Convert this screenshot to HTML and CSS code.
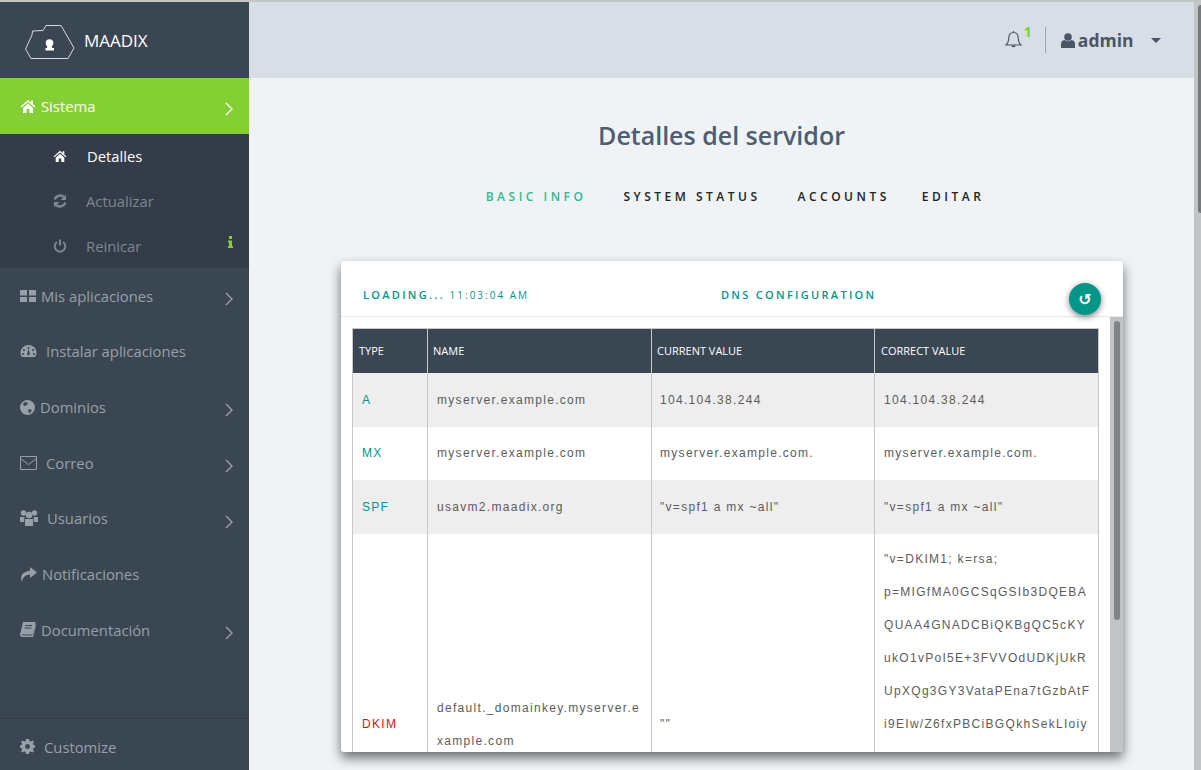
FILE: index.html
```html
<!DOCTYPE html>
<html lang="es">
<head>
    <meta charset="UTF-8">
    <title>Detalles del servidor</title>
    <link rel="stylesheet" href="styles.css">
</head>
<body>
    <div class="app">
        <!-- Sidebar -->
        <aside class="sidebar">
            <div class="brand">
                <svg class="brand-logo" width="50" height="35" viewBox="0 0 50 35" fill="none">
                    <path d="M.5 24 L7 10 L7.500 6 L18 5.500 L21 .5 H36 L49 23 L43 33.500 H6 Z" stroke="#d5d8dc" stroke-width="1"/>
                    <circle cx="24.500" cy="18" r="3.800" fill="#fff"/>
                    <path d="M22.500 19 H26.500 L27 23 H29 V25.500 H20.500 V23 H22 Z" fill="#fff"/>
                </svg>
                <span class="brand-name">MAADIX</span>
            </div>
            <nav class="nav">
                <a class="nav-item active">
                    <svg class="ic" width="16" height="14" viewBox="0 0 16 14"><path d="M8 1 L0.5 7.5 L1.5 8.5 L8 3 L14.5 8.5 L15.500 7.500 L13 5.300 V1.500 H11 V3.500 Z M3 9 L8 4.500 L13 9 V14 H9.500 V10 H6.500 V14 H3 Z"/></svg>
                    <span>Sistema</span>
                    <svg class="chev" width="8" height="14" viewBox="0 0 8 14"><path d="M1 1 L7 7 L1 13"/></svg>
                </a>
                <div class="subnav">
                    <a class="sub-item current">
                        <svg class="sub-ic" width="14" height="12" viewBox="0 0 16 14"><path d="M8 1 L0.5 7.5 L1.5 8.5 L8 3 L14.5 8.5 L15.500 7.500 L13 5.300 V1.500 H11 V3.500 Z M3 9 L8 4.500 L13 9 V14 H9.500 V10 H6.500 V14 H3 Z"/></svg>
                        <span>Detalles</span>
                    </a>
                    <a class="sub-item">
                        <svg class="sub-ic" width="14" height="14" viewBox="0 0 14 14" fill="none"><path d="M1.800 5.500 A5.500 5.500 0 0 1 11 3.200 M12.200 8.500 A5.500 5.500 0 0 1 3 10.800" stroke-width="2.400"/><path class="solid" d="M13 0.500 V6 H7.500 Z M1 13.500 V8 H6.500 Z"/></svg>
                        <span>Actualizar</span>
                    </a>
                    <a class="sub-item">
                        <svg class="sub-ic" width="14" height="14" viewBox="0 0 14 14" fill="none"><path d="M4 3 A5.300 5.300 0 1 0 10 3" stroke-width="2"/><path d="M7 0.500 V6.500" stroke-width="2"/></svg>
                        <span>Reinicar</span>
                        <svg class="sub-info" width="5" height="12" viewBox="0 0 5 12"><path d="M1 0 H4 V3 H1 Z M0 4.500 H4 V10 H5 V12 H0 V10 H1 V6.500 H0 Z"/></svg>
                    </a>
                </div>
                <a class="nav-item">
                    <svg class="ic" width="16" height="14" viewBox="0 0 16 14"><path d="M0 1 h7 v5.500 h-7 Z M9 1 h7 v5.500 h-7 Z M0 8 h7 v5 h-7 Z M9 8 h7 v5 h-7 Z"/></svg>
                    <span>Mis aplicaciones</span>
                    <svg class="chev" width="8" height="14" viewBox="0 0 8 14"><path d="M1 1 L7 7 L1 13"/></svg>
                </a>
                <a class="nav-item wide-gap">
                    <svg class="ic" width="17" height="14" viewBox="0 0 17 14"><path fill-rule="evenodd" d="M8.500 1 A8 8 0 0 1 16.500 9 Q16.500 11.500 15 13 H2 Q0.500 11.500 0.500 9 A8 8 0 0 1 8.500 1 Z M8.500 3 a1 1 0 1 0 .01 0 Z M4 5 a1 1 0 1 0 .01 0 Z M13 5 a1 1 0 1 0 .01 0 Z M3 9 a1 1 0 1 0 .01 0 Z M14 9 a1 1 0 1 0 .01 0 Z M8 6 L7 11 H10 L9 6 Z"/></svg>
                    <span>Instalar aplicaciones</span>
                </a>
                <a class="nav-item">
                    <svg class="ic" width="15" height="15" viewBox="0 0 15 15"><circle cx="7.500" cy="7.500" r="7.500"/><path class="cut" d="M5 2 L8 3 L7 5 L4 6 L3 4 Z M9 9 L12 10 L10 13 L8 12 Z"/></svg>
                    <span>Dominios</span>
                    <svg class="chev" width="8" height="14" viewBox="0 0 8 14"><path d="M1 1 L7 7 L1 13"/></svg>
                </a>
                <a class="nav-item wide-gap">
                    <svg class="ic" width="17" height="14" viewBox="0 0 17 14"><path class="line" d="M.500 .500 H16.500 V13.500 H.500 Z M.500 2.500 L8.500 8.500 L16.500 2.500"/></svg>
                    <span>Correo</span>
                    <svg class="chev" width="8" height="14" viewBox="0 0 8 14"><path d="M1 1 L7 7 L1 13"/></svg>
                </a>
                <a class="nav-item wide-gap">
                    <svg class="ic" width="18" height="16" viewBox="0 0 18 16"><circle cx="3.500" cy="3" r="2.700"/><circle cx="14.500" cy="3" r="2.700"/><circle cx="9" cy="5" r="3.300"/><path d="M0 7 H4.500 L4 12 H0 Z M13.500 7 H18 V12 H14 Z M5 9 H13 V16 H5 Z"/></svg>
                    <span>Usuarios</span>
                    <svg class="chev" width="8" height="14" viewBox="0 0 8 14"><path d="M1 1 L7 7 L1 13"/></svg>
                </a>
                <a class="nav-item">
                    <svg class="ic" width="17" height="15" viewBox="0 0 17 15"><path d="M10 0 L17 5.500 L10 11 V7.500 Q3 7.500 2 15 Q-2 6 10 3.500 Z"/></svg>
                    <span>Notificaciones</span>
                </a>
                <a class="nav-item">
                    <svg class="ic" width="16" height="15" viewBox="0 0 16 15"><path fill-rule="evenodd" d="M3 0 H15.500 L12.500 12.500 H2.500 Q1.500 12.500 1.800 13.500 H12 L15 2 L16 3 L13 15 H1.500 Q-.5 14 .300 11.500 Z M5 3 V4 H12 V3 Z M4.500 5.500 V6.500 H11.500 V5.500 Z"/></svg>
                    <span>Documentación</span>
                    <svg class="chev" width="8" height="14" viewBox="0 0 8 14"><path d="M1 1 L7 7 L1 13"/></svg>
                </a>
            </nav>
            <a class="customize">
                <svg class="ic" width="15" height="15" viewBox="0 0 15 15"><path fill-rule="evenodd" d="M6 0 H9 L9.400 2 L10.900 2.600 L12.600 1.500 L14 3 L12.800 4.600 L13.400 6 L15 6.300 V8.700 L13.400 9 L12.800 10.400 L14 12 L12.600 13.500 L10.900 12.400 L9.400 13 L9 15 H6 L5.600 13 L4.100 12.400 L2.400 13.500 L1 12 L2.200 10.400 L1.600 9 L0 8.700 V6.300 L1.600 6 L2.200 4.600 L1 3 L2.400 1.500 L4.100 2.600 L5.600 2 Z M7.500 5 a2.500 2.500 0 1 0 .01 0 Z"/></svg>
                <span>Customize</span>
            </a>
        </aside>

        <!-- Contenido -->
        <div class="main">
            <header class="topbar">
                <div class="bell">
                    <svg width="17" height="20" viewBox="0 0 17 20" fill="none" stroke="#4a5668" stroke-width="1.100"><path d="M8.500 2.500 C5 2.500 3.800 5 3.800 8 C3.800 11.500 2.800 13.500 1 15 H16 C14.200 13.500 13.200 11.500 13.200 8 C13.200 5 12 2.500 8.500 2.500 Z"/><path d="M8.500 1 V2.500"/><path d="M6.800 15.500 a1.800 1.800 0 0 0 3.400 0" fill="#4a5668"/></svg>
                    <span class="bell-count">1</span>
                </div>
                <div class="user">
                    <svg width="14" height="15" viewBox="0 0 14 15" fill="#4a5668"><circle cx="7" cy="4" r="3.800"/><path d="M0 15 V11 Q0 7.500 3.500 7 Q7 9.500 10.500 7 Q14 7.500 14 11 V15 Z"/></svg>
                    <span class="user-name">admin</span>
                    <span class="caret"></span>
                </div>
            </header>

            <section class="content">
                <h1 class="title">Detalles del servidor</h1>
                <ul class="tabs">
                    <li class="tab selected">BASIC INFO</li>
                    <li class="tab">SYSTEM STATUS</li>
                    <li class="tab">ACCOUNTS</li>
                    <li class="tab last">EDITAR</li>
                </ul>

                <div class="card">
                    <div class="card-head">
                        <div class="status"><b>LOADING...</b> <span>11:03:04 AM</span></div>
                        <div class="card-title">DNS CONFIGURATION</div>
                        <button class="refresh">↺</button>
                    </div>
                    <div class="card-body">
                        <table class="dns">
                            <colgroup><col class="c1"><col class="c2"><col class="c3"><col class="c4"></colgroup>
                            <thead>
                                <tr><th>TYPE</th><th>NAME</th><th>CURRENT VALUE</th><th>CORRECT VALUE</th></tr>
                            </thead>
                            <tbody>
                                <tr class="odd r1"><td class="ok">A</td><td>myserver.example.com</td><td>104.104.38.244</td><td>104.104.38.244</td></tr>
                                <tr class="r2"><td class="ok">MX</td><td>myserver.example.com</td><td>myserver.example.com.</td><td>myserver.example.com.</td></tr>
                                <tr class="odd r3"><td class="ok">SPF</td><td>usavm2.maadix.org</td><td>"v=spf1 a mx ~all"</td><td>"v=spf1 a mx ~all"</td></tr>
                                <tr class="dkim"><td class="bad">DKIM</td><td>default._domainkey.myserver.example.com</td><td>""</td><td>"v=DKIM1; k=rsa; p=MIGfMA0GCSqGSIb3DQEBAQUAA4GNADCBiQKBgQC5cKYukO1vPoI5E+3FVVOdUDKjUkRUpXQg3GY3VataPEna7tGzbAtFi9EIw/Z6fxPBCiBGQkhSekLIoiy</td></tr>
                            </tbody>
                        </table>
                        <div class="inner-scroll"><div class="inner-thumb"></div></div>
                    </div>
                </div>
            </section>
        </div>

        <div class="page-scroll"><div class="page-thumb"></div></div>
    </div>
</body>
</html>
```
FILE: styles.css
```css
/* Layout principal */
html, body {
    margin: 0;
    height: 100%;
    overflow: hidden;
}
body {
    font-family: "Open Sans", sans-serif;
    background: #eff3f6;
}
a {
    text-decoration: none;
}
.app {
    display: flex;
    height: 770px;
    border-top: 2px solid #c4c6c6;
    box-sizing: border-box;
}

/* Sidebar */
.sidebar {
    width: 249px;
    flex: none;
    display: flex;
    flex-direction: column;
    background: #3b4653;
    color: #97a0a8;
}
.brand {
    height: 76px;
    display: flex;
    align-items: center;
    padding-left: 25px;
    gap: 9px;
}
.brand-logo {
    margin-top: 4px;
}
.brand-name {
    color: #fff;
    font-size: 17px;
}
.nav {
    flex: 1;
}
.nav-item {
    display: flex;
    align-items: center;
    height: 55.670px;
    padding: 0 20px;
    gap: 5px;
    font-size: 14.800px;
    color: #97a0a8;
    position: relative;
}
.nav-item.wide-gap {
    gap: 9px;
}
.nav-item.active {
    height: 56px;
    background: #84cf33;
    color: #fff;
}
.ic {
    fill: currentColor;
    flex: none;
}
.ic .cut {
    fill: #3b4653;
}
.ic .line {
    fill: none;
    stroke: currentColor;
    stroke-width: 1;
}
.chev {
    position: absolute;
    right: 16px;
    top: 24px;
    fill: none;
    stroke: currentColor;
    stroke-width: 1.400;
}
.subnav {
    background: #333c48;
    height: 134px;
}
.sub-item {
    display: flex;
    align-items: center;
    height: 45px;
    padding: 0 0 2px 53px;
    box-sizing: border-box;
    font-size: 14.800px;
    color: #7d8691;
    position: relative;
}
.sub-item.current {
    color: #fff;
}
.sub-ic {
    width: 14px;
    margin-right: 19px;
    fill: currentColor;
    stroke: currentColor;
    stroke-width: 0;
}
.sub-item.current .sub-ic {
    margin-right: 20px;
}
.sub-item .sub-ic[fill="none"] {
    fill: none;
}
.sub-ic .solid {
    fill: currentColor;
    stroke: none;
}
.sub-info {
    position: absolute;
    left: 228px;
    top: 12px;
    fill: #84cf33;
}
.customize {
    height: 52px;
    padding: 4px 0 0 20px;
    box-sizing: border-box;
    border-top: 1px solid #333c48;
    display: flex;
    align-items: center;
    gap: 9px;
    font-size: 14.800px;
    color: #97a0a8;
}

/* Contenido */
.main {
    flex: 1;
    min-width: 0;
}
.topbar {
    height: 76px;
    background: #d7dee6;
    display: flex;
    justify-content: flex-end;
    align-items: center;
    padding-right: 33px;
}
.bell {
    display: flex;
    padding-right: 13px;
    position: relative;
    height: 26px;
    align-items: center;
    width: 28px;
    margin-right: 15px;
    border-right: 1px solid #9ea8b3;
}
.bell svg {
    margin-left: 1px;
}
.bell-count {
    position: absolute;
    left: 20px;
    top: -5px;
    color: #84cf33;
    font-size: 14px;
    font-weight: bold;
}
.user {
    display: flex;
    align-items: center;
    color: #4a5668;
}
.user-name {
    font-size: 17.500px;
    font-weight: bold;
    margin-left: 3px;
    margin-right: 17.500px;
}
.caret {
    border-left: 5px solid transparent;
    border-right: 5px solid transparent;
    border-top: 5px solid #4a5668;
}
.content {
    padding-top: 40px;
}
.title {
    margin: 0;
    text-align: center;
    font-size: 25px;
    font-weight: 600;
    line-height: 34px;
    color: #4f5d71;
}
.tabs {
    list-style: none;
    margin: 36px 0 0;
    padding: 0 0 0 27px;
    display: flex;
    justify-content: center;
    gap: 37px;
    height: 18px;
}
.tab {
    font-size: 12px;
    font-weight: 600;
    letter-spacing: 3.500px;
    line-height: 18px;
    color: #222;
}
.tab.last {
    margin-left: -5px;
}
.tab.selected {
    color: #2dbd8d;
}

/* Card */
.card {
    margin: 55px 0 0 92px;
    width: 782px;
    height: 491px;
    background: #fff;
    border-radius: 3px;
    box-shadow: 0 6px 12px rgba(0, 0, 0, .55);
    overflow: hidden;
    position: relative;
}
.card-head {
    height: 55px;
    border-bottom: 1px solid #e8e8e8;
    position: relative;
}
.status {
    position: absolute;
    left: 22px;
    top: 27px;
    color: #009688;
    font-size: 10px;
    letter-spacing: 2px;
    line-height: 14px;
}
.status b {
    font-size: 11px;
    font-weight: 600;
    letter-spacing: 2.300px;
}
.card-title {
    position: absolute;
    left: 380px;
    top: 26px;
    color: #009688;
    font-size: 11px;
    font-weight: 600;
    letter-spacing: 2.300px;
    line-height: 16px;
}
.refresh {
    position: absolute;
    left: 728px;
    top: 22px;
    width: 32px;
    height: 32px;
    padding: 0;
    border: 0;
    border-radius: 50%;
    background: #009688;
    color: #fff;
    font-family: "DejaVu Sans", sans-serif;
    font-size: 16px;
    font-weight: bold;
    box-shadow: 0 2px 6px rgba(0, 0, 0, .5);
}
.card-body {
    padding: 11px 0 0 11px;
    position: relative;
}
.dns {
    width: 747px;
    table-layout: fixed;
    border-collapse: collapse;
    font-family: "Liberation Sans", sans-serif;
    font-size: 12px;
    letter-spacing: 1.300px;
    color: #5c5c5c;
}
.c1 { width: 75px; }
.c2 { width: 224px; }
.c3 { width: 223px; }
.c4 { width: 224px; }
.dns th {
    height: 42px;
    padding: 0 5px 2px;
    text-align: left;
    background: #3b4653;
    border: 1px solid #c8c8c8;
    border-bottom: 0;
    color: #fff;
    font-family: "Open Sans", sans-serif;
    font-size: 11px;
    font-weight: 500;
    letter-spacing: 0;
}
.dns th:first-child, .dns th:last-child {
    padding-left: 6px;
}
.dns td {
    padding: 0 5px 0 9px;
    border: 1px solid #c8c8c8;
    border-width: 0 1px;
    vertical-align: middle;
    line-height: 33px;
    overflow-wrap: break-word;
}
.dns td:nth-child(3) {
    padding-left: 8px;
}
.r1 td { height: 54px; }
.r2 td { height: 53px; }
.r3 td { height: 54px; }
.odd td {
    background: #eee;
}
.dns td.ok {
    color: #009688;
}
.dns td.bad {
    color: #d9120f;
}
.dkim td {
    height: 372px;
}
.dkim td:last-child {
    vertical-align: top;
    padding-top: 9px;
}
.inner-scroll {
    position: absolute;
    right: 0;
    top: 0;
    width: 13px;
    height: 100%;
    background: #c1c4c4;
}
.inner-thumb {
    margin: 4px 0 0 4px;
    width: 6px;
    height: 299px;
    border-radius: 3px;
    background: #7f8384;
}

/* Scroll da página */
.page-scroll {
    width: 7px;
    flex: none;
    background: #c1c4c4;
    padding-top: 3px;
    box-sizing: border-box;
}
.page-thumb {
    margin-left: 4px;
    height: 208px;
    border-radius: 3px 0 0 3px;
    background: #75797a;
}
```
